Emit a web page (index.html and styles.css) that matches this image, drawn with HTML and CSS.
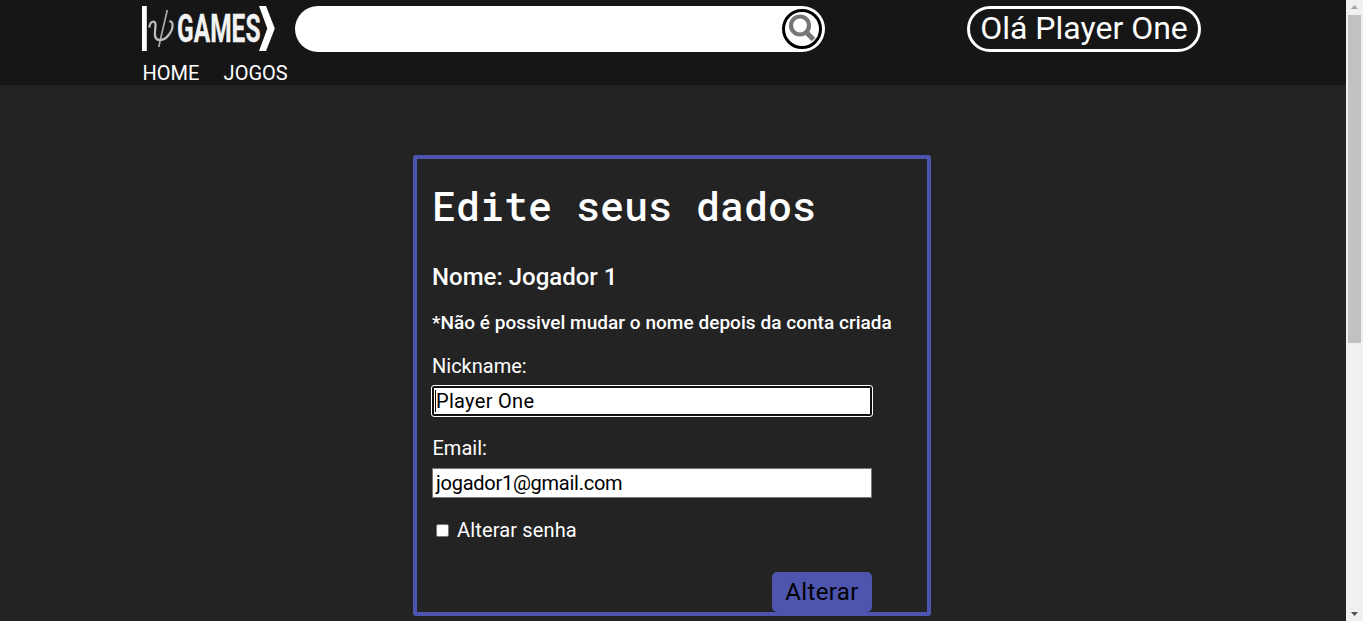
FILE: index.html
```html
<!DOCTYPE html>
<html lang="pt-BR">
<head>
<meta charset="utf-8">
<title>Games</title>
<link rel="stylesheet" href="styles.css">
</head>
<body>
<div class="window">
  <div class="page">
    <header class="header">
      <div class="topbar">
        <svg class="logo" width="134" height="46" viewBox="0 0 134 46">
          <path class="logo-solid" d="M0 0h4.800v45H0zM117 0h7l8.800 22.500L124 45h-7l8.300-22.500z"/>
          <path class="psi-line" d="M25.300 4L16.700 41"/>
          <path class="psi-curve" d="M7.300 21.500C8 15 13.500 13.500 13.500 19C13.500 25 10.500 34 18 34C25 34 31.500 24 30.500 18C30 15.500 28.500 15 27.500 16"/>
          <text class="logo-text" x="35" y="36.300" textLength="83.500" lengthAdjust="spacingAndGlyphs">GAMES</text>
        </svg>
        <div class="search">
          <button class="search-button">
            <svg width="34" height="34" viewBox="0 0 34 34">
              <circle cx="15" cy="13.500" r="9" fill="none" stroke="#777" stroke-width="4.200"/>
              <path d="M21.500 20.500l7 7" stroke="#777" stroke-width="5"/>
            </svg>
          </button>
        </div>
        <div class="greeting"><span>Olá Player One</span></div>
      </div>
      <nav class="nav"><span class="home">HOME</span><span class="games">JOGOS</span></nav>
    </header>
    <main class="card">
      <h1 class="title">Edite seus dados</h1>
      <div class="name">Nome: Jogador 1</div>
      <div class="note">*Não é possivel mudar o nome depois da conta criada</div>
      <div class="label nick">Nickname:</div>
      <div class="input focused"><span class="value">Player One</span></div>
      <div class="label email">Email:</div>
      <div class="input"><span class="value mail">jogador1@gmail.com</span></div>
      <div class="check-row"><span class="box"></span><span class="check-label">Alterar senha</span></div>
      <button class="submit">Alterar</button>
    </main>
  </div>
  <div class="scrollbar">
    <svg width="17" height="15"><path d="M5 9h7l-3.500-4z" fill="#a3a3a3"/></svg>
    <div class="thumb"></div>
    <svg width="17" height="15"><path d="M5 6h7l-3.500 4z" fill="#505050"/></svg>
  </div>
</div>
</body>
</html>
```
FILE: styles.css
```css
* { box-sizing: border-box; }
body { margin: 0; background: #fff; font-family: Roboto, sans-serif; color: #fff; overflow: hidden; }
.window { display: flex; width: 1363px; height: 621px; }
.page { width: 1346px; background: #232323; }
.header { height: 85px; background: #161616; padding: 6px 145px 0 142px; }
.topbar { display: flex; height: 46px; }
.logo { flex: none; overflow: visible; }
.logo-solid, .logo-text { fill: #fff; }
.logo-text { font: bold 39px Roboto, sans-serif; fill: #f2f2f2; stroke: #f2f2f2; stroke-width: .3; }
.psi-line { stroke: #aaa; stroke-width: 1.7; }
.psi-curve { stroke: #bbb; stroke-width: 2.3; fill: none; }
.search { display: flex; justify-content: flex-end; align-items: center; width: 530px; height: 46px; margin-left: 19px; padding-right: 3px; border-radius: 23px; background: #fff; }
.search-button { width: 40px; height: 40px; padding: 0; border: 3px solid #000; border-radius: 50%; background: #fff; }
.search-button svg { display: block; }
.greeting { display: flex; justify-content: center; align-items: center; width: 234px; height: 46px; margin-left: auto; border: 3px solid #fff; border-radius: 23px; font-size: 32px; line-height: 40px; white-space: nowrap; }
.greeting span { margin-top: -3px; }
.nav { display: flex; margin-top: 9px; padding-left: .6px; font-size: 20px; line-height: 24px; }
.home { width: 81px; }
.card { display: flex; flex-direction: column; width: 518px; height: 461px; margin: 70px 0 0 413px; padding: 23px 14px 0 15px; border: 4px solid #4d55ae; border-radius: 3px; white-space: nowrap; }
.title { margin: 0; font: 500 40px/48px "Roboto Mono", "DejaVu Sans Mono", monospace; }
.name { margin-top: 33px; font-size: 24px; line-height: 28px; font-weight: 500; }
.note { margin-top: 20px; font-size: 19px; line-height: 24px; font-weight: 500; letter-spacing: .04px; }
.label { margin-top: 19px; font-size: 20px; line-height: 24px; }
.email { margin-top: 20px; padding-left: .5px; }
.input { display: flex; align-items: center; flex: none; width: 440px; height: 30px; margin-top: 8px; padding-left: 3px; border: 1px solid #767676; background: #fff; color: #000; font-size: 20px; }
.mail { letter-spacing: -.26px; }
.focused { padding-left: 2px; border: 1px solid #101010; border-radius: 2px; outline: 1px solid #fff; box-shadow: inset 0 0 0 1px #101010; }
.focused .value { border-left: 1px solid #000; line-height: 22px; letter-spacing: .3px; }
.check-row { display: flex; align-items: center; height: 24px; margin-top: 20px; padding-left: 4px; font-size: 20px; letter-spacing: .15px; }
.box { width: 13px; height: 13px; margin-right: 8px; border: 1px solid #767676; border-radius: 2px; background: #fff; }
.submit { flex: none; width: 100px; height: 40px; margin: 30px 0 0 340px; padding: 0; border: 0; border-radius: 5px; background: #4d55ae; color: #000; font: 24px Roboto, sans-serif; letter-spacing: .4px; }
.scrollbar { display: flex; flex-direction: column; width: 17px; background: #f0f0f0; }
.scrollbar svg { display: block; flex: none; }
.thumb { width: 13px; height: 328px; margin: 0 2px auto; background: #c1c1c1; }
```
